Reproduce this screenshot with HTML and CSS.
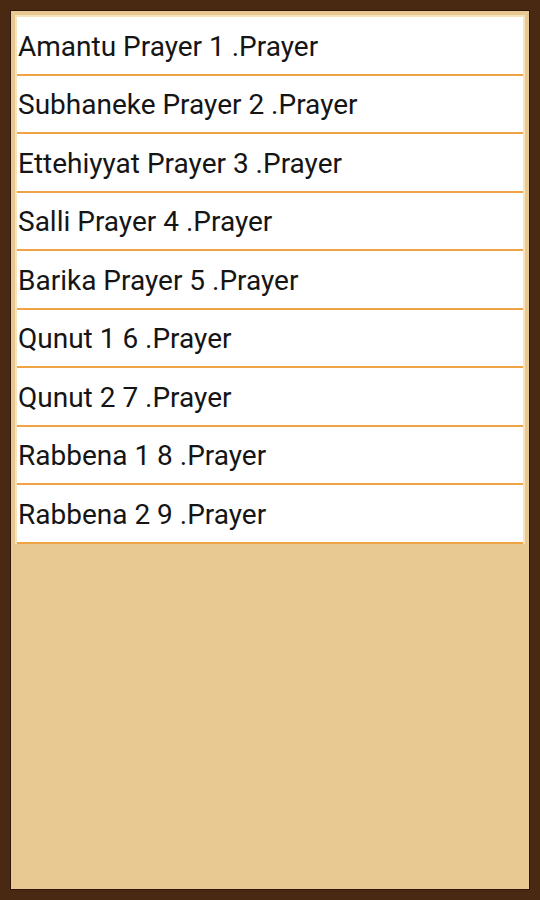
FILE: index.html
```html
<!DOCTYPE html>
<html>
<head>
<meta charset="utf-8">
<link rel="stylesheet" href="styles.css">
</head>
<body>
<div class="frame">
  <ul class="list">
    <li class="row">Amantu Prayer 1 .Prayer</li>
    <li class="row">Subhaneke Prayer 2 .Prayer</li>
    <li class="row">Ettehiyyat Prayer 3 .Prayer</li>
    <li class="row">Salli Prayer 4 .Prayer</li>
    <li class="row">Barika Prayer 5 .Prayer</li>
    <li class="row">Qunut 1 6 .Prayer</li>
    <li class="row">Qunut 2 7 .Prayer</li>
    <li class="row">Rabbena 1 8 .Prayer</li>
    <li class="row">Rabbena 2 9 .Prayer</li>
  </ul>
</div>
</body>
</html>
```
FILE: styles.css
```css
html, body {
  margin: 0;
  padding: 0;
  background: #4a2912;
  width: 540px;
  height: 900px;
  overflow: hidden;
}
.frame {
  box-sizing: border-box;
  margin: 10px;
  width: 520px;
  height: 880px;
  background: #e8c991;
  border: 1px solid #2f170a;
  padding: 4px;
}
.list {
  list-style: none;
  margin: 0;
  padding: 0;
  border: 2px solid #f8e3bb;
  border-bottom: none;
  background: transparent;
}
.row {
  box-sizing: border-box;
  height: 58.5px;
  background: #ffffff;
  border-bottom: 2px solid #f0a448;
  display: flex;
  align-items: center;
  padding-left: 1px;
  padding-top: 2px;
  font-family: Roboto, "Noto Sans", sans-serif;
  font-size: 28px;
  color: #151515;
}
```
